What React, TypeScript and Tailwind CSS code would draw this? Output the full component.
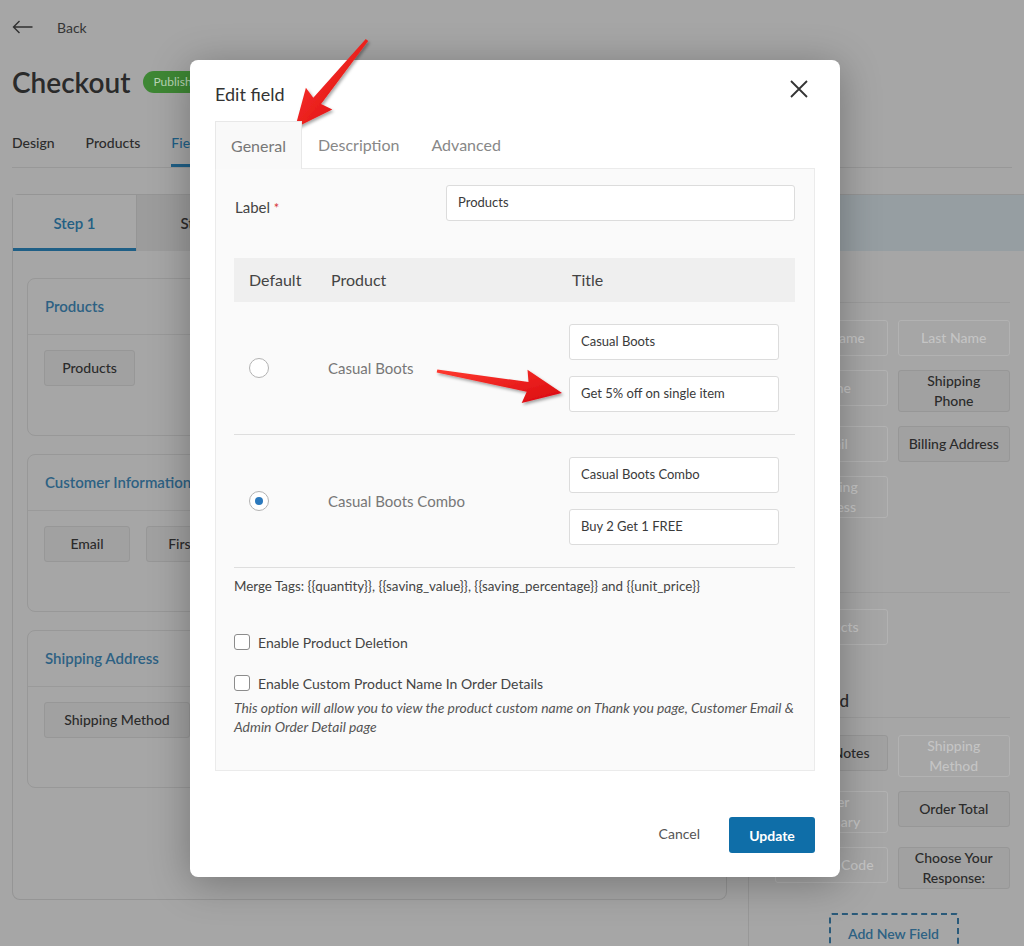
import React from 'react';

// Background page (already dimmed by the modal backdrop)

type ChipProps = { label: React.ReactNode; muted?: boolean; className?: string };

function Chip({ label, muted, className = '' }: ChipProps) {
  return (
    <div
      className={`flex min-h-[36px] items-center justify-center rounded-[3px] border px-[8px] text-center text-[14px] font-medium leading-[20px] ${
        muted ? 'border-[#b2b2b2] bg-[#a6a6a6] text-[#c4c4c4]' : 'border-[#979797] bg-[#a1a1a1] text-[#2b2b2b]'
      } ${className}`}
    >
      {label}
    </div>
  );
}

function SectionCard({ title, children }: { title: string; children: React.ReactNode }) {
  return (
    <div className="h-[158px] shrink-0 rounded-[8px] border border-[#989898]">
      <div className="flex h-[56px] items-center border-b border-[#9a9a9a] px-[17px] text-[15px] font-semibold text-[#2d6183]">
        {title}
      </div>
      <div className="flex gap-[16px] px-[16px] pt-[15px]">{children}</div>
    </div>
  );
}

function BackgroundPage() {
  return (
    <div className="flex h-full flex-col">
      <div className="flex h-[54px] shrink-0 items-center gap-[24px] px-[12px] text-[#353535]">
        <svg width="21" height="14" viewBox="0 0 21 14" fill="none" stroke="#303030" strokeWidth="1.4">
          <path d="M20.5 7H1.5M7.5 1L1.5 7l6 6" />
        </svg>
        <span className="text-[14px]">Back</span>
      </div>
      <div className="flex h-[56px] shrink-0 items-center gap-[13px] px-[12px]">
        <h1 className="text-[28px] font-semibold text-[#2a2a2a]">Checkout</h1>
        <span className="rounded-full bg-[#3e8734] px-[10px] py-[2px] text-[12px] text-[#b9d4b4]">Published</span>
      </div>
      <div className="mx-[12px] flex h-[58px] shrink-0 items-end gap-[31px] border-b border-[#989898] text-[14px] font-medium text-[#2c2c2c]">
        <span className="border-b-[3px] border-transparent pb-[11px]">Design</span>
        <span className="border-b-[3px] border-transparent pb-[11px]">Products</span>
        <span className="border-b-[3px] border-[#1f5f86] pb-[11px] text-[#1f5f86]">Fields</span>
      </div>
      <div className="ml-[12px] mt-[26px] flex shrink-0 flex-col">
        <div className="flex h-[57px] shrink-0 rounded-tl-[6px] border-l border-t border-[#959595] bg-[#969ea2]">
          <div className="flex w-[123px] items-center justify-center border-b-[3px] border-[#1f5f86] bg-[#a7a7a7] pt-[3px] text-[15px] font-semibold text-[#235f84]">
            Step 1
          </div>
          <div className="flex w-[130px] items-center justify-center border-l border-[#959595] bg-[#9c9c9c] text-[15px] font-semibold text-[#2b2b2b]">
            Step 2
          </div>
        </div>
        <div className="flex shrink-0">
          <div className="flex h-[649px] w-[715px] shrink-0 flex-col gap-[18px] rounded-b-[8px] border-x border-b border-[#959595] px-[14px] pt-[27px]">
            <SectionCard title="Products">
              <Chip label="Products" className="w-[91px]" />
            </SectionCard>
            <SectionCard title="Customer Information">
              <Chip label="Email" className="w-[86px]" />
              <Chip label="First Name" className="w-[112px]" />
            </SectionCard>
            <SectionCard title="Shipping Address">
              <Chip label="Shipping Method" className="w-[146px]" />
            </SectionCard>
          </div>
          <div className="ml-[21px] flex h-[700px] flex-1 flex-col border-l border-[#989898] pl-[26px] pr-[14px]">
            <div className="flex h-[52px] shrink-0 items-end border-b border-[#9c9c9c] pb-[10px] text-[17px] font-medium text-[#2b2b2b]">
              Basic
            </div>
            <div className="mt-[17px] grid grid-cols-2 items-start gap-x-[10px] gap-y-[14px]">
              <Chip label="First Name" muted />
              <Chip label="Last Name" muted />
              <Chip label="Phone" muted />
              <Chip label={<>Shipping<br />Phone</>} className="min-h-[42px]" />
              <Chip label="Email" muted />
              <Chip label="Billing Address" />
              <Chip label={<>Shipping<br />Address</>} muted className="min-h-[42px]" />
            </div>
            <div className="mt-[74px] shrink-0 border-b border-[#9c9c9c]" />
            <div className="mt-[16px] grid grid-cols-2 gap-x-[10px]">
              <Chip label="Products" muted />
            </div>
            <div className="flex h-[73px] shrink-0 items-end border-b border-[#9c9c9c] pb-[4px] text-[17px] font-medium text-[#2b2b2b]">
              Advanced
            </div>
            <div className="mt-[17px] grid grid-cols-2 items-start gap-x-[10px] gap-y-[14px]">
              <Chip label="Order Notes" />
              <Chip label={<>Shipping<br />Method</>} muted className="min-h-[42px]" />
              <Chip label={<>Order<br />Summary</>} muted className="min-h-[36px]" />
              <Chip label="Order Total" />
              <Chip label="Coupon Code" muted />
              <Chip label={<>Choose Your<br />Response:</>} className="min-h-[41px]" />
            </div>
            <div className="mt-[24px] flex shrink-0 justify-center pl-[2px]">
              <div className="flex h-[40px] w-[130px] items-center justify-center rounded-[3px] border-2 border-dashed border-[#2a5a7a] text-[14px] font-semibold text-[#2d6183]">
                Add New Field
              </div>
            </div>
          </div>
        </div>
      </div>
    </div>
  );
}

// Modal

function Radio({ checked }: { checked?: boolean }) {
  return (
    <span className="flex h-[20px] w-[20px] items-center justify-center rounded-full border-[1.5px] border-[#b3b3b3] bg-white">
      {checked && <span className="h-[8px] w-[8px] rounded-full bg-[#2b79bd]" />}
    </span>
  );
}

function TextInput({ value, className = '' }: { value: string; className?: string }) {
  return (
    <div
      className={`flex h-[36px] items-center rounded-[3px] border border-[#dcdcdc] bg-white px-[11px] text-[13px] text-[#3a3a3a] ${className}`}
    >
      {value}
    </div>
  );
}

function Checkbox({ label }: { label: string }) {
  return (
    <label className="flex h-[16px] items-center gap-[8px] text-[14px] text-[#444]">
      <span className="h-[16px] w-[16px] rounded-[3px] border border-[#8c8c8c] bg-white" />
      {label}
    </label>
  );
}

const products = [
  { name: 'Casual Boots', title: 'Casual Boots', desc: 'Get 5% off on single item', checked: false },
  { name: 'Casual Boots Combo', title: 'Casual Boots Combo', desc: 'Buy 2 Get 1 FREE', checked: true },
];

function EditFieldModal() {
  return (
    <div className="absolute left-[190px] top-[60px] flex h-[817px] w-[650px] flex-col rounded-[8px] bg-white shadow-[0_6px_40px_rgba(0,0,0,0.3)]">
      <div className="flex h-[61px] shrink-0 items-start justify-between px-[25px] pt-[22px]">
        <h2 className="text-[18px] leading-[24px] text-[#333]">Edit field</h2>
        <svg className="-mt-[2px] mr-[7px]" width="18" height="18" viewBox="0 0 18 18" stroke="#333" strokeWidth="1.8">
          <path d="M1 1l16 16M17 1L1 17" />
        </svg>
      </div>

      <div className="mx-[25px] flex h-[47px] shrink-0 items-center text-[16px] text-[#888]">
        <div className="relative z-10 -mb-px flex h-[48px] w-[87px] items-center justify-center self-start border-x border-t border-[#e8e8e8] bg-[#f9f9f9] text-[#777]">
          General
        </div>
        <span className="ml-[16px]">Description</span>
        <span className="ml-[32px]">Advanced</span>
      </div>

      <div className="mx-[25px] flex h-[603px] shrink-0 flex-col border border-[#ebebeb] bg-[#fafafa] pl-[18px] pr-[19px] pt-[16px]">
        <div className="flex items-center">
          <div className="mt-[8px] w-[212px] pl-[1px] text-[15px] text-[#444]">
            Label <span className="text-[13px] text-[#d63638]">*</span>
          </div>
          <TextInput value="Products" className="flex-1" />
        </div>

        <div className="mt-[37px] grid h-[44px] grid-cols-[82px_238px_1fr] items-center bg-[#efefef] text-[16px] text-[#444]">
          <span className="pl-[15px]">Default</span>
          <span className="pl-[15px]">Product</span>
          <span className="pl-[18px]">Title</span>
        </div>

        {products.map((p) => (
          <div key={p.name} className="grid grid-cols-[82px_238px_1fr] items-center border-b border-[#dedede] py-[22px]">
            <div className="pl-[15px]">
              <Radio checked={p.checked} />
            </div>
            <span className="pl-[12px] text-[15px] text-[#777]">{p.name}</span>
            <div className="flex w-[225px] flex-col gap-[16px] pl-[15px]">
              <TextInput value={p.title} />
              <TextInput value={p.desc} />
            </div>
          </div>
        ))}

        <p className="mt-[10px] text-[13.4px] leading-[16px] text-[#444]">
          Merge Tags: {'{{quantity}}'}, {'{{saving_value}}'}, {'{{saving_percentage}}'} and {'{{unit_price}}'}
        </p>

        <div className="mt-[40px]">
          <Checkbox label="Enable Product Deletion" />
        </div>
        <div className="mt-[25px]">
          <Checkbox label="Enable Custom Product Name In Order Details" />
        </div>
        <p className="mt-[7px] text-[13.9px] italic leading-[19px] text-[#555]">
          This option will allow you to view the product custom name on Thank you page, Customer Email &amp; Admin Order Detail page
        </p>
      </div>

      <div className="flex flex-1 items-end justify-end gap-[29px] px-[25px] pb-[24px]">
        <span className="mb-[9px] text-[14px] text-[#555]">Cancel</span>
        <button className="h-[36px] w-[86px] rounded-[3px] bg-[#0f6ea8] text-[14px] font-bold text-white">Update</button>
      </div>
    </div>
  );
}

// Red annotation arrows drawn over the screenshot
function Annotations() {
  return (
    <svg className="pointer-events-none absolute inset-0" width="1024" height="946" viewBox="0 0 1024 946">
      <defs>
        <linearGradient id="red" x1="0" y1="0" x2="1" y2="1">
          <stop offset="0" stopColor="#ff3a30" />
          <stop offset="1" stopColor="#d8080e" />
        </linearGradient>
        <filter id="shadow" x="-20%" y="-20%" width="140%" height="140%">
          <feDropShadow dx="1.5" dy="2" stdDeviation="1.5" floodColor="#000" floodOpacity="0.35" />
        </filter>
      </defs>
      <polygon
        filter="url(#shadow)"
        fill="url(#red)"
        points="368.2,40.9 321.1,104.1 332.3,109.4 295,128 305.9,87.8 313.3,97.7 365.8,39.1"
      />
      <polygon
        filter="url(#shadow)"
        fill="url(#red)"
        points="437.3,369.5 528.5,382 527.5,369.7 562,393 521.7,403.1 526.7,391.8 436.7,372.5"
      />
    </svg>
  );
}

export default function App() {
  return (
    <div className="relative h-[946px] w-[1024px] overflow-hidden bg-[#a6a6a6] font-['Lato','Noto_Sans',sans-serif]">
      <BackgroundPage />
      <EditFieldModal />
      <Annotations />
    </div>
  );
}
